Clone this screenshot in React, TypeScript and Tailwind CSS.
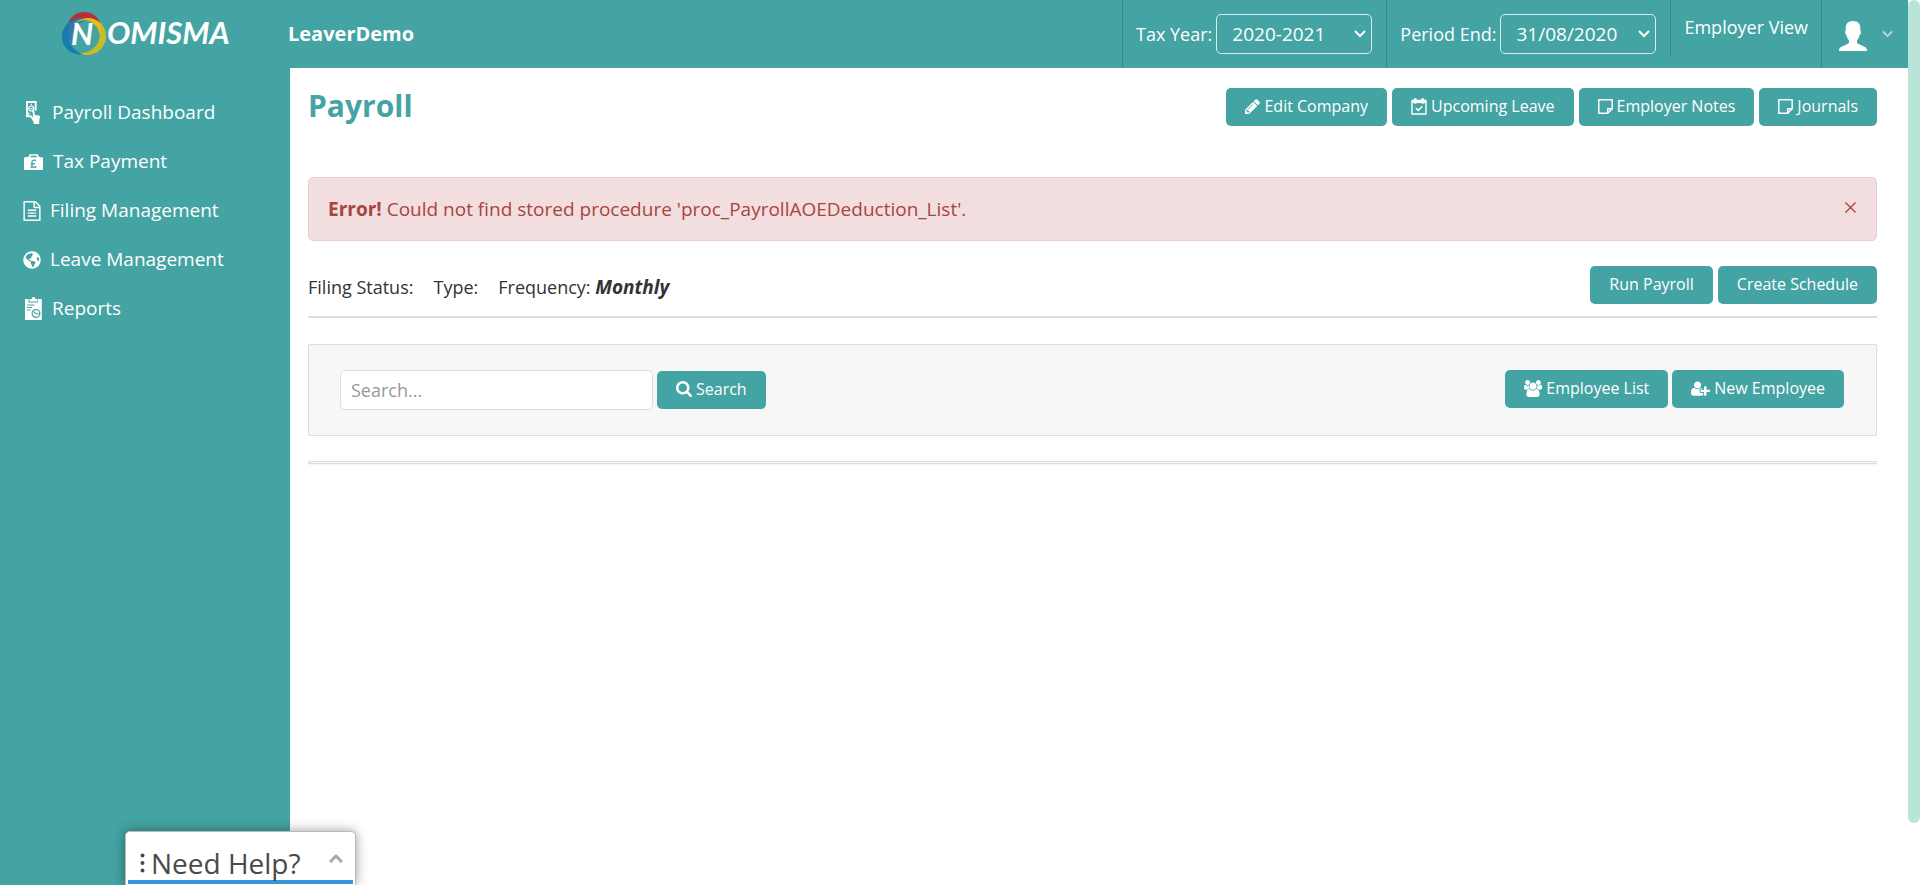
import type { ReactNode } from "react";
import { FaChevronDown, FaGlobeAmericas } from "react-icons/fa";

type IconProps = { className?: string };

function PencilIcon() {
  return (
    <svg viewBox="128 128 1536 1536" className="size-[15px]" fill="currentColor" aria-hidden="true">
      <path d="M491 1536l91-91-235-235-91 91v107h128v128h107zm523-928q0-22-22-22-10 0-17 7l-542 542q-7 7-7 17 0 22 22 22 10 0 17-7l542-542q7-7 7-17zm-54-192l416 416-832 832h-416v-416zm683 96q0 53-37 90l-166 166-416-416 166-165q36-38 90-38 53 0 91 38l235 234q37 39 37 91z" />
    </svg>
  );
}

function CalendarIcon() {
  return (
    <svg viewBox="0 0 16 17" className="h-[17px] w-4" fill="none" stroke="currentColor" aria-hidden="true">
      <path d="M1 2.5h14V16H1z" strokeWidth="1.4" strokeLinejoin="round" />
      <path d="M1 3.8h14" strokeWidth="2.6" />
      <path d="M4.3 1.6v2.6M11.7 1.6v2.6" strokeWidth="3" strokeLinecap="round" />
      <path d="M4.8 10l2.4 2.4 4.2-4.2" strokeWidth="1.5" />
    </svg>
  );
}

function NoteIcon() {
  return (
    <svg viewBox="0 0 15 15" className="size-[15px]" fill="none" stroke="currentColor" strokeWidth="1.5" strokeLinejoin="round" aria-hidden="true">
      <path d="M.8.8h13.400v8.900l-4.500 4.500H.8z" />
      <path d="M14.200 9.700H9.700v4.500" />
    </svg>
  );
}

function SearchIcon() {
  return (
    <svg viewBox="64 128 1664 1664" className="size-4" fill="currentColor" aria-hidden="true">
      <path d="M1216 832q0-185-131.500-316.500t-316.500-131.500-316.500 131.500-131.500 316.500 131.500 316.500 316.500 131.500 316.500-131.500 131.500-316.500zm512 832q0 52-38 90t-90 38q-54 0-90-38l-343-342q-179 124-399 124-143 0-273.500-55.500t-225-150-150-225-55.500-273.500 55.500-273.500 150-225 225-150 273.500-55.500 273.500 55.500 225 150 150 225 55.500 273.500q0 220-124 399l343 343q37 37 37 90z" />
    </svg>
  );
}

function UsersIcon() {
  return (
    <svg viewBox="0 0 1920 1792" className="h-[17px] w-[18px]" fill="currentColor" aria-hidden="true">
      <path d="M593 896q-162 5-265 128h-134q-82 0-138-40.500t-56-118.500q0-353 124-353 6 0 43.500 21t97.500 42.500 119 21.500q67 0 133-23-5 37-5 66 0 159 90 288zm1071 637q0 120-73 189.500t-194 69.500h-874q-121 0-194-69.500t-73-189.500q0-53 3.500-103.500t14-109 26.500-108.500 43-97.500 62-81 85.500-53.500 111.500-20q10 0 43 21.500t73 48 107 48 135 21.500 135-21.500 107-48 73-48 43-21.500q61 0 111.500 20t85.500 53.500 62 81 43 97.500 26.500 108.500 14 109 3.500 103.500zm-1024-1277q0 106-75 181t-181 75-181-75-75-181 75-181 181-75 181 75 75 181zm704 384q0 159-112.500 271.500t-271.500 112.500-271.500-112.500-112.500-271.500 112.500-271.500 271.500-112.500 271.500 112.500 112.500 271.500zm576 225q0 78-56 118.500t-138 40.500h-134q-103-123-265-128 90-129 90-288 0-29-5-66 66 23 133 23 59 0 119-21.500t97.500-42.500 43.500-21q124 0 124 353zm-128-609q0 106-75 181t-181 75-181-75-75-181 75-181 181-75 181 75 75 181z" />
    </svg>
  );
}

function UserPlusIcon() {
  return (
    <svg viewBox="0 0 2048 1792" className="h-[17px] w-[19px]" fill="currentColor" aria-hidden="true">
      <path d="M704 896q-159 0-271.500-112.500t-112.500-271.500 112.500-271.500 271.500-112.500 271.500 112.500 112.500 271.500-112.500 271.500-271.500 112.500zm960 128h352q13 0 22.500 9.500t9.500 22.500v192q0 13-9.500 22.500t-22.500 9.500h-352v352q0 13-9.500 22.500t-22.500 9.500h-192q-13 0-22.500-9.500t-9.500-22.500v-352h-352q-13 0-22.500-9.500t-9.500-22.500v-192q0-13 9.500-22.500t22.500-9.500h352v-352q0-13 9.500-22.500t22.500-9.500h192q13 0 22.500 9.500t9.500 22.500v352zm-736 224q0 52 38 90t90 38h256v238q-68 50-171 50h-874q-121 0-194-69t-73-190q0-53 3.500-103.500t14-109 26.500-108.500 43-97.500 62-81 85.500-53.500 111.500-20q19 0 39 17 79 61 154.500 91.500t164.500 30.500 164.500-30.500 154.500-91.500q20-17 39-17 132 0 217 96h-223q-52 0-90 38t-38 90v192z" />
    </svg>
  );
}

function FileIcon() {
  return (
    <svg viewBox="128 0 1536 1792" className="h-5 w-[18px]" fill="currentColor" aria-hidden="true">
      <path d="M1596 380q28 28 48 76t20 88v1152q0 40-28 68t-68 28h-1344q-40 0-68-28t-28-68v-1600q0-40 28-68t68-28h896q40 0 88 20t76 48zm-444-244v376h376q-10-29-22-41l-313-313q-12-12-41-22zm384 1528v-1024h-416q-40 0-68-28t-28-68v-416h-768v1536h1280zm-1024-864q0-14 9-23t23-9h704q14 0 23 9t9 23v64q0 14-9 23t-23 9h-704q-14 0-23-9t-9-23v-64zm736 224q14 0 23 9t9 23v64q0 14-9 23t-23 9h-704q-14 0-23-9t-9-23v-64q0-14 9-23t23-9h704zm0 256q14 0 23 9t9 23v64q0 14-9 23t-23 9h-704q-14 0-23-9t-9-23v-64q0-14 9-23t23-9h704z" />
    </svg>
  );
}

function CashHandIcon() {
  return (
    <svg viewBox="0 0 14 23" className="h-[23px] w-3.5" aria-hidden="true">
      <path d="M9.700 9.500V1H1V15.300H5.500" fill="none" stroke="#fff" strokeWidth="1.900" />
      <path d="M2.500 14v-2.200l2 1.200" fill="none" stroke="#fff" strokeWidth=".8" />
      <circle cx="5.300" cy="7.500" r="2.500" fill="none" stroke="#fff" strokeWidth="1.200" />
      <path d="M4 7.700h3M5.300 2.800v1.600" stroke="#fff" strokeWidth="1.100" />
      <path d="M6.300 9.500c.8-.6 2-.1 2.100.8l.5 3.600 3.800.7c.9.2 1.300.7 1.300 1.500l-.8 3.900V23H7.600v-2L4.800 16.500c-.5-1 .6-1.600 1.300-1l1.100 1z" fill="#fff" />
    </svg>
  );
}

function BriefcaseIcon() {
  return (
    <svg viewBox="0 0 19 16" className="h-4 w-[19px]" aria-hidden="true">
      <path d="M6 4V1h7.500v3" fill="none" stroke="#fff" strokeWidth="1.500" />
      <path d="M1 3.200h2.500v-.7h1.500v.7h9v-.7h1.500v.7H18q1 0 1 1V15q0 1-1 1H1q-1 0-1-1V4.200q0-1 1-1z" fill="#fff" />
      <path d="M11.800 7c-.5-1.200-3.800-1.400-3.800.8 0 1.500.9 2.800-.7 5.200h5.200M6.500 9.800h4.500" fill="none" stroke="#44a3a3" strokeWidth="1.300" />
    </svg>
  );
}

function ReportIcon() {
  return (
    <svg viewBox="0 0 17 23" className="h-[23px] w-[17px]" aria-hidden="true">
      <path d="M0 2h3.500v3.500h9.500V2h3.800v21H0z" fill="#fff" />
      <path d="M4.500 2h2.300c.2-2.600 3.200-2.600 3.400 0h2.300v2.500h-8z" fill="#fff" />
      <path d="M2 8h7.500M2 10.500h5M2 13h3.500" stroke="#44a3a3" strokeWidth="1" />
      <circle cx="11" cy="16.500" r="3.900" fill="none" stroke="#44a3a3" strokeWidth="1.200" />
      <path d="M8.500 14.500l2.500 2.200h3.800" fill="none" stroke="#44a3a3" strokeWidth="1.100" />
    </svg>
  );
}

function UserIcon({ className }: IconProps) {
  return (
    <svg viewBox="0 0 28 30" className={className} fill="currentColor" aria-hidden="true">
      <path d="M14 0c4.600 0 7.300 2.800 7.300 6.500v3.200c.7.300.7 1.200.5 2.200-.2 1-.6 1.700-1.200 1.900-.4 2.400-1.400 4.200-2.600 5.400v2.300c0 2.200 10 3.500 10 7.300V30H0v-1.200c0-3.800 10-5.100 10-7.300v-2.300c-1.200-1.200-2.200-3-2.600-5.400-.6-.2-1-.9-1.200-1.900-.2-1-.2-1.900.5-2.200V6.500C6.700 2.800 9.400 0 14 0z" />
    </svg>
  );
}

function Logo() {
  return (
    <svg viewBox="0 0 170 44" className="h-11 w-[170px]" role="img" aria-label="Nomisma">
      <path d="M5 14C8 4 15 0 22 0c8 0 14 4 17 13-9-8-25-8-34 1z" fill="#b92f38" />
      <path d="M20 7C32 3 44 12 44 24c0 11-9 19-20 19-4 0-6-1-8-2 14 1 22-6 22-16 0-9-7-17-18-18z" fill="#ecbd17" />
      <path d="M38 10c10 10 7 33-14 33-4 0-6-1-8-2 17 1 25-12 22-31z" fill="#c5bd2a" />
      <path d="M20 6C8 6 0 14 0 25c0 10 8 18 22 18C12 39 7 33 7 24 7 15 12 9 20 6z" fill="#167cab" />
      <path d="M20 6C14 7 7 11 6 19c1 7 2 11 4 14C9 20 13 12 25 8z" fill="#3978aa" />
      <path d="M11 13C18 5 30 5 36 14c-2-3-4-4-6-4-6-3-13-2-19 3z" fill="#e0b51f" />
      <text x="9" y="33" fill="#fff" className="font-['Lato',sans-serif] text-[31px] font-bold italic">N</text>
      <text x="45" y="32" fill="#fff" className="font-['Lato',sans-serif] text-[31px] font-bold italic">OMISMA</text>
    </svg>
  );
}

function Button({ icon, children }: { icon?: ReactNode; children: ReactNode }) {
  return (
    <button type="button" className="flex h-[38px] cursor-pointer items-center gap-1 rounded-[5px] bg-[#44a3a3] px-[19px] pb-0.5 text-base text-white">
      {icon}
      {children}
    </button>
  );
}

function HeaderSelect({ id, label, value }: { id: string; label: string; value: string }) {
  return (
    <div className="flex items-center gap-1 border-l border-[#338c8c] pr-3.5 pl-[13px]">
      <label htmlFor={id} className="text-lg">{label}</label>
      <div className="relative">
        <select id={id} className="h-10 w-[156px] appearance-none rounded-[5px] border border-[#dcecec] bg-[#44a3a3] pl-[15px] text-[19px] text-white">
          <option>{value}</option>
        </select>
        <svg viewBox="0 0 12 8" className="pointer-events-none absolute top-4 right-1.5 h-2 w-3" fill="none" stroke="#fff" strokeWidth="2" aria-hidden="true">
          <path d="M1 1l5 5 5-5" />
        </svg>
      </div>
    </div>
  );
}

const navItems = [
  { label: "Payroll Dashboard", icon: <CashHandIcon />, slot: "pl-[26px] gap-3" },
  { label: "Tax Payment", icon: <BriefcaseIcon />, slot: "pl-6 gap-2.5" },
  { label: "Filing Management", icon: <FileIcon />, slot: "pl-[23px] gap-[9px]" },
  { label: "Leave Management", icon: <FaGlobeAmericas className="size-[18px]" aria-hidden="true" />, slot: "pl-[23px] gap-[9px]" },
  { label: "Reports", icon: <ReportIcon />, slot: "pl-[25px] gap-2.5" },
];

export default function App() {
  return (
    <div className="relative flex min-h-screen bg-white font-['Open_Sans',sans-serif] text-[#333]">
      <div className="flex min-w-0 grow flex-col">
        <header className="flex h-[68px] bg-[#44a3a3] text-white">
          <div className="w-72 pt-3 pl-[62px]">
            <Logo />
          </div>
          <div className="flex grow items-center text-xl font-bold">LeaverDemo</div>
          <HeaderSelect id="tax-year" label="Tax Year:" value="2020-2021" />
          <HeaderSelect id="period-end" label="Period End:" value="31/08/2020" />
          <a href="#employer" className="flex h-14 items-center border-l border-[#338c8c] px-[13px] pb-0.5 text-lg">
            Employer View
          </a>
          <button type="button" aria-label="Account" className="flex cursor-pointer items-center gap-[15px] border-l border-[#338c8c] pr-[15px] pl-[17px]">
            <UserIcon className="mt-1 h-[30px] w-7" />
            <FaChevronDown className="h-3 w-[11px] text-[#b4dada]" aria-hidden="true" />
          </button>
        </header>
        <div className="flex grow">
          <nav className="flex w-[290px] shrink-0 flex-col bg-[#44a3a3] pt-5 text-white">
            {navItems.map((item) => (
              <a key={item.label} href="#nav" className={"flex h-[49px] items-center text-[19px] " + item.slot}>
                {item.icon}
                {item.label}
              </a>
            ))}
          </nav>
          <main className="min-w-0 grow pt-5 pr-[31px] pl-[18px]">
            <div className="flex h-[38px] items-center justify-between">
              <h1 className="pb-1 text-[30px] font-bold text-[#44a3a3]">Payroll</h1>
              <div className="flex gap-[5px]">
                <Button icon={<PencilIcon />}>Edit Company</Button>
                <Button icon={<CalendarIcon />}>Upcoming Leave</Button>
                <Button icon={<NoteIcon />}>Employer Notes</Button>
                <Button icon={<NoteIcon />}>Journals</Button>
              </div>
            </div>
            <div role="alert" className="mt-[51px] flex h-16 items-center justify-between rounded-[5px] border border-[#ebccd1] bg-[#f2dede] pr-5 pl-[19px] text-[19px] text-[#a94442]">
              <p>
                <strong>Error!</strong> Could not find stored procedure 'proc_PayrollAOEDeduction_List'.
              </p>
              <button type="button" aria-label="Close" className="cursor-pointer pb-1">
                <svg viewBox="0 0 11 11" className="size-[11px]" stroke="currentColor" strokeWidth="1.4" aria-hidden="true">
                  <path d="M.5.5l10 10M10.500.5l-10 10" />
                </svg>
              </button>
            </div>
            <div className="mt-[25px] flex justify-between border-b-2 border-[#ddd] pb-3">
              <p className="flex items-baseline gap-5 pt-[7px] text-lg">
                <span>Filing Status:</span>
                <span>Type:</span>
                <span>Frequency: <b className="text-[19px] font-bold italic">Monthly</b></span>
              </p>
              <div className="flex gap-[5px]">
                <Button>Run Payroll</Button>
                <Button>Create Schedule</Button>
              </div>
            </div>
            <div className="mt-[26px] flex h-[92px] items-center justify-between rounded-xs border border-[#ddd] bg-[#f7f7f7] pr-8 pl-[31px]">
              <form className="flex items-center gap-1">
                <input type="text" aria-label="Search" placeholder="Search..." className="h-10 w-[313px] rounded-[5px] border border-[#ddd] bg-white px-2.5 text-lg placeholder:text-[#999]" />
                <Button icon={<SearchIcon />}>Search</Button>
              </form>
              <div className="flex gap-1 pb-0.5">
                <Button icon={<UsersIcon />}>Employee List</Button>
                <Button icon={<UserPlusIcon />}>New Employee</Button>
              </div>
            </div>
            <div className="mt-[25px] h-[3px] border border-[#ddd] bg-[#f7f7f7] shadow-xs" />
          </main>
        </div>
      </div>
      <div className="h-[93vh] w-3 rounded-full bg-[#b9e5d8]" />
      <button type="button" className="absolute bottom-0 left-[125px] flex h-[54px] w-[231px] cursor-pointer flex-col rounded-t-[5px] border border-b-0 border-[#bbb] bg-white px-[2px] text-[#4a4a4a] shadow-[0_0_12px_rgba(0,0,0,0.4)]">
        <span className="mt-3.5 flex h-[38px] w-full items-center border-b-4 border-[#3598db] pl-3 text-[28px] leading-9 font-medium">
          <svg viewBox="0 0 5 20" className="mr-1.5 h-5 w-[5px]" fill="currentColor" aria-hidden="true">
            <circle cx="2.500" cy="2.500" r="2" />
            <circle cx="2.500" cy="10" r="2" />
            <circle cx="2.500" cy="17.500" r="2" />
          </svg>
          <span className="grow text-left">Need Help?</span>
          <svg viewBox="0 0 14 9" className="mr-2.5 mb-2.5 h-[9px] w-3.5 text-[#aaa]" fill="none" stroke="currentColor" strokeWidth="3" aria-hidden="true">
            <path d="M1 8l6-6 6 6" />
          </svg>
        </span>
      </button>
    </div>
  );
}
